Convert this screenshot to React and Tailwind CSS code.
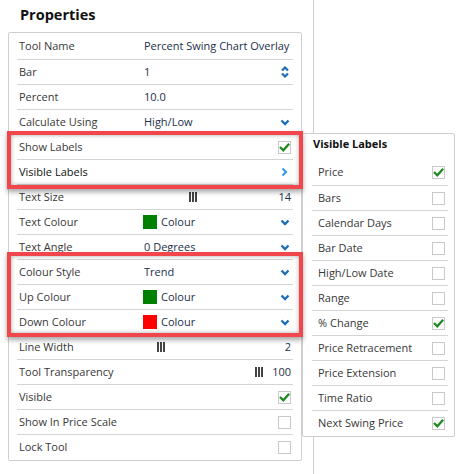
import React from "react";

const Check = ({ on }) => (
  <div className="w-[13px] h-[13px] border border-[#c9c9c9] bg-white flex items-center justify-center">
    {on && (
      <svg width="11" height="11" viewBox="0 0 11 11">
        <path d="M1.8 5.8 L4.3 8.3 L9.4 2.6" fill="none" stroke="#1f8a1f" strokeWidth="2.3" strokeLinecap="square" />
      </svg>
    )}
  </div>
);

const ChevronDown = () => (
  <svg width="10" height="7" viewBox="0 0 10 7">
    <path d="M1.5 1.5 L5 5 L8.5 1.5" fill="none" stroke="#1b6db5" strokeWidth="2.3" />
  </svg>
);

const ChevronRight = () => (
  <svg width="7" height="10" viewBox="0 0 7 10">
    <path d="M1.5 1.5 L5 5 L1.5 8.5" fill="none" stroke="#3a9de6" strokeWidth="2.2" />
  </svg>
);

const Spinner = () => (
  <svg width="8" height="14" viewBox="0 0 8 14">
    <path d="M1 5.5 L4 2.5 L7 5.5" fill="none" stroke="#1b6db5" strokeWidth="2.2" />
    <path d="M1 8.5 L4 11.5 L7 8.5" fill="none" stroke="#1b6db5" strokeWidth="2.2" />
  </svg>
);

const Grip = () => (
  <div className="flex gap-[1px] h-[10px]">
    <div className="w-[2px] h-full bg-[#444]" />
    <div className="w-[2px] h-full bg-[#444]" />
    <div className="w-[2px] h-full bg-[#444]" />
  </div>
);

const Swatch = ({ color }) => (
  <div className={`w-[14px] h-[14px] ${color} mr-[4px]`} />
);

const rows = [
  { label: "Tool Name", value: "Percent Swing Chart Overlay" },
  { label: "Bar", value: "1", icon: "spin" },
  { label: "Percent", value: "10.0" },
  { label: "Calculate Using", value: "High/Low", icon: "down" },
  { label: "Show Labels", icon: "check" },
  { label: "Visible Labels", icon: "right", dark: true },
  { label: "Text Size", slider: "ml-[46px]", num: "14" },
  { label: "Text Colour", swatch: "bg-[#008000]", value: "Colour", icon: "down" },
  { label: "Text Angle", value: "0 Degrees", icon: "down" },
  { label: "Colour Style", value: "Trend", icon: "down" },
  { label: "Up Colour", swatch: "bg-[#008000]", value: "Colour", icon: "down" },
  { label: "Down Colour", swatch: "bg-[#ff0000]", value: "Colour", icon: "down" },
  { label: "Line Width", slider: "ml-[14px]", num: "2" },
  { label: "Tool Transparency", slider: "ml-[112px]", num: "100" },
  { label: "Visible", icon: "check" },
  { label: "Show In Price Scale", icon: "empty" },
  { label: "Lock Tool", icon: "empty" },
];

const labels = [
  ["Price", true],
  ["Bars", false],
  ["Calendar Days", false],
  ["Bar Date", false],
  ["High/Low Date", false],
  ["Range", false],
  ["% Change", true],
  ["Price Retracement", false],
  ["Price Extension", false],
  ["Time Ratio", false],
  ["Next Swing Price", true],
];

function Row({ r, first }) {
  return (
    <div className={`h-[25px] flex items-center pl-[2px] pr-[2px] ${first ? "" : "border-t border-[#d4d4d4]"}`}>
      <div className={`w-[124px] shrink-0 ${r.dark ? "text-[#111]" : "text-[#383838]"}`}>{r.label}</div>
      <div className="flex-1 flex items-center text-[#22304a] min-w-0 whitespace-nowrap">
        {r.swatch && <Swatch color={r.swatch} />}
        {r.value && <span className={r.swatch ? "" : "pl-[1px]"}>{r.value}</span>}
        {r.slider && (
          <div className="flex-1 flex items-center">
            <div className={r.slider}>
              <Grip />
            </div>
          </div>
        )}
        {r.num && <span className="text-[#22304a] ml-[8px]">{r.num}</span>}
      </div>
      {r.icon && (
        <div className="w-[13px] flex items-center justify-center shrink-0">
          {r.icon === "check" && <Check on />}
          {r.icon === "empty" && <Check on={false} />}
          {r.icon === "down" && <ChevronDown />}
          {r.icon === "right" && <ChevronRight />}
          {r.icon === "spin" && <Spinner />}
        </div>
      )}
    </div>
  );
}

export default function App() {
  return (
    <div className="relative w-[463px] h-[474px] bg-white font-['Open_Sans',sans-serif] text-[11px] overflow-hidden">
      <div className="w-[314px] h-full border-r border-[#cfcfcf]">
        <div className="h-[32px] pl-[20px] pt-[3px] text-[14.5px] leading-[24px] font-bold text-[#111]">Properties</div>
        <div className="ml-[8px] w-[294px] border border-[#cfcfcf] rounded-[2px] px-[8px] pt-[1px] pb-[1px]">
          {rows.map((r, i) => (
            <Row key={r.label} r={r} first={i === 0} />
          ))}
        </div>
      </div>

      <div className="absolute left-[302px] top-[133px] w-[153px] h-[304px] bg-white border border-[#cfcfcf] rounded-[2px]">
        <div className="h-[26px] pl-[10px] leading-[20px] font-bold text-[#111]">Visible Labels</div>
        <div className="ml-[9px] mr-[6px]">
          {labels.map(([l, on], i) => (
            <div key={l} className={`h-[25px] flex items-center pl-[6px] pr-[3px] ${i === 0 ? "" : "border-t border-[#d4d4d4]"}`}>
              <div className="flex-1 text-[#383838]">{l}</div>
              <Check on={on} />
            </div>
          ))}
        </div>
      </div>

      <div className="absolute left-[7px] top-[131px] w-[296px] h-[58px] border-[4px] border-[#f0464c] shadow-[0_3px_5px_rgba(0,0,0,0.35),inset_0_0_4px_rgba(0,0,0,0.35)]" />
      <div className="absolute left-[7px] top-[252px] w-[296px] h-[85px] border-[4px] border-[#f0464c] shadow-[0_3px_5px_rgba(0,0,0,0.35),inset_0_0_4px_rgba(0,0,0,0.35)]" />
    </div>
  );
}
